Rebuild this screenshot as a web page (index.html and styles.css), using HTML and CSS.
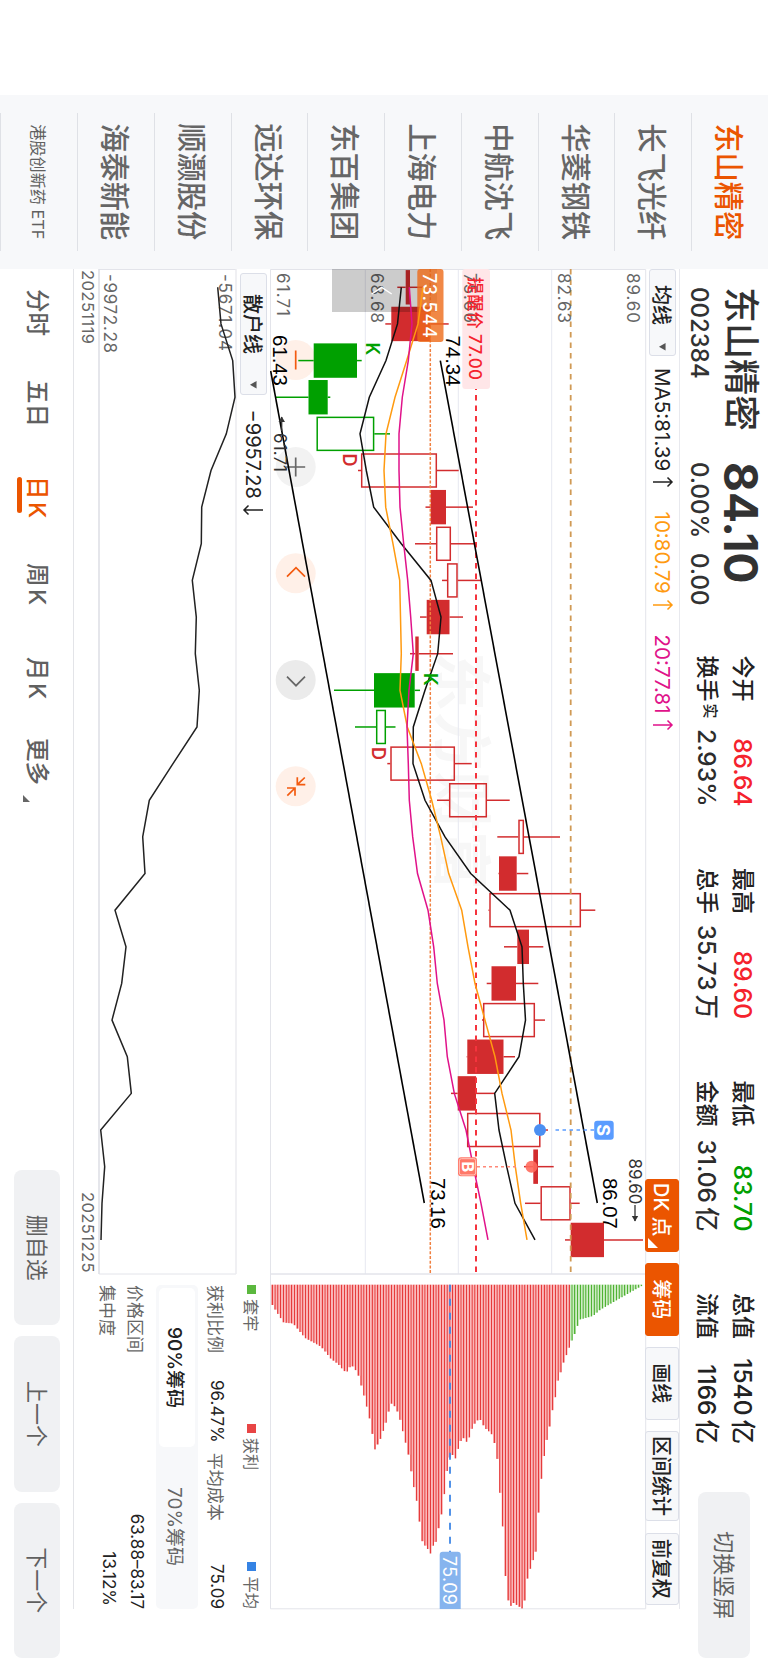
FILE: index.html
```html
<!DOCTYPE html>
<html lang="zh-CN">
<head>
<meta charset="utf-8">
<title>东山精密 002384</title>
<link rel="stylesheet" href="styles.css">
</head>
<body>
<div class="screen">
<div class="stage">
  <nav class="watchlist">
    <div class="stock active">东山精密</div>
    <div class="stock">长飞光纤</div>
    <div class="stock">华菱钢铁</div>
    <div class="stock">中航沈飞</div>
    <div class="stock">上海电力</div>
    <div class="stock">东百集团</div>
    <div class="stock">远达环保</div>
    <div class="stock">顺灏股份</div>
    <div class="stock">海泰新能</div>
    <div class="stock small">港股创新药 ETF</div>
  </nav>
  <main class="main">
    <header class="quote">
      <div class="headline">
        <span class="name">东山精密</span><span class="price">84.10</span>
        <div class="sub"><span class="code">002384</span><span class="pct">0.00%</span><span>0.00</span></div>
      </div>
      <div class="stats">
        <div class="stat"><span>今开</span><b class="up">86.64</b><span>换手<sup>实</sup></span><i>2.93%</i></div>
        <div class="stat"><span>最高</span><b class="up">89.60</b><span>总手</span><i>35.73<em>万</em></i></div>
        <div class="stat"><span>最低</span><b class="down">83.70</b><span>金额</span><i>31.06<em>亿</em></i></div>
        <div class="stat"><span>总值</span><b>1540<em>亿</em></b><span>流值</span><b>1166<em>亿</em></b></div>
      </div>
      <button class="btn rotate">切换竖屏</button>
    </header>
    <div class="toolbar">
      <div class="select ma">均线<svg class="caret" viewBox="0 0 8 8"><path d="M0 0.5H8L4 7.5Z"/></svg></div>
      <div class="legend-ma">
        <span class="m5">MA5:81.39<svg class="arr" viewBox="0 0 12 22"><path d="M6 21V2M1.5 6.5L6 2L10.500 6.500"/></svg></span>
        <span class="m10">10:80.79<svg class="arr" viewBox="0 0 12 22"><path d="M6 21V2M1.5 6.5L6 2L10.500 6.500"/></svg></span>
        <span class="m20">20:77.81<svg class="arr" viewBox="0 0 12 22"><path d="M6 21V2M1.5 6.5L6 2L10.500 6.500"/></svg></span>
      </div>
      <div class="tools">
        <div class="tool on dk">DK 点<svg class="corner" viewBox="0 0 10 10"><path d="M10 0V10H0Z"/></svg></div>
        <div class="tool on">筹码</div>
        <div class="tool">画线</div>
        <div class="tool wide">区间统计</div>
        <div class="tool">前复权</div>
      </div>
    </div>
    <section class="board">
      <svg id="kline" class="kline" viewBox="269 122 1005 376"></svg>
      <svg id="chips" class="chips" viewBox="1274 122 335 376"></svg>
    </section>
    <section class="lower">
      <div class="indicator">
        <div class="ind-bar">
          <div class="select ind">散户线<svg class="caret" viewBox="0 0 8 8"><path d="M0 0.5H8L4 7.5Z"/></svg></div>
          <span class="ind-val">−9957.28<svg class="arr" viewBox="0 0 12 22"><path d="M6 1V20M1.5 15.500L6 20L10.500 15.500"/></svg></span>
        </div>
        <svg id="retail" class="retail" viewBox="269 532 1005 137"></svg>
        <div class="dates"><span>20251119</span><span>20251225</span></div>
      </div>
      <div class="cost">
        <div class="keys"><span class="key k-green">套牢</span><span class="key k-red">获利</span><span class="key k-blue">平均</span></div>
        <div class="pair top"><span>获利比例</span><b>96.47%</b><span class="avg">平均成本</span><b class="end">75.09</b></div>
        <div class="seg"><span class="cur">90%筹码</span><span>70%筹码</span></div>
        <div class="pair"><span>价格区间</span><b class="end">63.88–83.17</b></div>
        <div class="pair"><span>集中度</span><b class="end inset">13.12%</b></div>
      </div>
    </section>
    <footer class="tabs">
      <div class="periods">
        <span>分时</span><span>五日</span><span class="sel">日<em>K</em></span><span>周<em>K</em></span><span>月<em>K</em></span><span class="more">更多<svg class="tri" viewBox="0 0 7 7"><path d="M7 0V7H0Z"/></svg></span>
      </div>
      <div class="actions"><button class="btn">删自选</button><button class="btn">上一个</button><button class="btn">下一个</button></div>
    </footer>
  </main>
</div>
</div>
<script src="chart.js"></script>
</body>
</html>
```
FILE: styles.css
```css
* { box-sizing: border-box; }
html, body { margin: 0; padding: 0; background: #fff; }
body {
  width: 768px; height: 1669px; overflow: hidden;
  font-family: Inter, "Noto Sans CJK SC", sans-serif; color: #323232;
}
.screen { width: 768px; height: 1669px; overflow: hidden; contain: paint; }
.stage {
  width: 1669px; height: 768px; display: flex; padding-left: 94.500px;
  transform-origin: 0 0; transform: translateX(768px) rotate(90deg);
  background: #fff; white-space: nowrap; overflow: hidden;
}
svg { display: block; overflow: visible; }
sup, b, i, em { font-style: normal; }

.watchlist { width: 174.500px; background: #f7f8fa; padding: 0 18px; flex: none; overflow: hidden; }
.stock {
  height: 76.750px; display: flex; align-items: center; justify-content: center;
  border-bottom: 1px solid #dfe1e6; font-size: 29.300px; font-weight: 500; color: #666; padding-bottom: 2px;
}
.stock.active { color: #eb5500; }
.stock.small { font-size: 16.200px; font-weight: 400; color: #606060; padding-bottom: 0; }

.main { width: 1400px; display: flex; flex-direction: column; }

.quote { height: 87.500px; display: flex; flex: none; padding-left: 18px; position: relative; }
.headline { width: 368.500px; display: grid; grid-template-columns: 175px 1fr; grid-template-rows: 54px 30px; align-items: center; }
.name { font-size: 36px; font-weight: 500; line-height: 54px; }
.price { font-size: 46px; font-weight: 700; line-height: 54px; }
.sub { grid-column: 1 / 3; display: grid; grid-template-columns: 175px 91px auto; font-size: 24px; font-weight: 500; line-height: 30px; }
.stats { display: flex; gap: 61.500px; }
.stat {
  width: 151px; display: grid; grid-template-columns: auto auto; justify-content: space-between;
  grid-template-rows: 35.400px 35.400px; align-items: center; padding-top: 8px; align-content: start;
  font-size: 23px; line-height: 35px; color: #222; font-weight: 500;
}
.stat b { font-weight: 500; font-size: 24.500px; text-align: right; }
.stat i { font-weight: 500; font-size: 24.500px; text-align: right; color: #2c2c2c; }
.stat em { margin-left: 4px; }
.stat sup { font-size: 15px; line-height: 10px; vertical-align: 6px; margin-left: 2px; }
.stat .up { color: #f5222d; }
.stat .down { color: #00a000; }
.btn {
  border: 0; background: #f0f1f3; color: #606060; border-radius: 8px; padding: 0;
  font: 400 22px/1 Inter, "Noto Sans CJK SC", sans-serif; width: 155.300px; height: 45.500px;
}
.btn.rotate { width: 166px; height: 52px; margin: 18px 0 0 48.300px; }

.toolbar { width: 1340px; height: 34.500px; flex: none; display: flex; border-top: 1px solid #e8e9ee; }
.select {
  height: 27.500px; border: 1px solid #dcdfe8; border-radius: 3px; background: #f7f8fa; display: flex;
  align-items: center; color: #222; font-size: 20px; font-weight: 500;
}
.select.ma { width: 87px; margin-top: 3px; padding-left: 15px; }
.caret { width: 7.500px; height: 7.500px; margin-left: 18px; fill: #555; }
.legend-ma { display: flex; margin-left: 12px; font-size: 20.600px; align-items: center; }
.legend-ma span { display: flex; align-items: center; }
.arr { width: 12px; height: 22px; fill: none; stroke: currentColor; stroke-width: 1.5; margin-left: 5px; }
.m5 { width: 143.500px; color: #222; }
.m10 { width: 123px; color: #ff9a10; }
.m20 { color: #e0128a; }
.tools { display: flex; gap: 11.500px; margin-left: auto; margin-right: 4px; }
.tool {
  width: 72.500px; height: 34px; border: 1px solid #dcdfe8; border-radius: 3px; background: #f7f8fa; flex: none;
  font-size: 20px; font-weight: 500; color: #222; display: flex; align-items: center; justify-content: center; position: relative;
}
.tool.wide { width: 90px; }
.tool.on { background: #eb5500; border-color: #eb5500; color: #fff; }
.tool.dk { padding-right: 11px; }
.corner { position: absolute; right: 3px; bottom: 2px; width: 10px; height: 10px; fill: #fff; }

.board { display: flex; width: 1340px; height: 376px; flex: none; }
.kline { width: 1005px; height: 376px; }
.chips { width: 335px; height: 376px; }
.lower { display: flex; width: 1340px; height: 197px; flex: none; border-bottom: 1px solid #e3e4e8; }
.indicator { width: 1005px; }
.ind-bar { height: 34px; display: flex; align-items: center; padding-left: 4px; }
.select.ind { width: 122px; padding-left: 20px; margin-top: -1px; }
.select.ind .caret { margin-left: 27px; }
.ind-val { display: flex; align-items: center; margin-left: 14.500px; font-size: 20px; color: #222; }
.retail { width: 1005px; height: 137px; }
.dates { height: 25px; display: flex; justify-content: space-between; font-size: 16.500px; line-height: 23px; color: #666; padding: 0 1px; letter-spacing: .45px; }

.cost { width: 335px; padding-left: 11px; font-size: 17px; color: #666; }
.keys { height: 38px; display: flex; justify-content: space-between; align-items: center; font-size: 16.300px; padding-bottom: 3px; }
.key { display: flex; align-items: center; gap: 5px; }
.key::before { content: ""; width: 9px; height: 9px; margin-top: 1px; }
.k-green::before { background: #5bb83e; }
.k-red::before { background: #e84545; }
.k-blue::before { background: #3583e4; }
.pair { height: 28px; display: flex; align-items: center; }
.pair b { font-weight: 400; color: #222; }
.pair.top { height: 30px; margin-bottom: 4px; }
.pair.top b:first-of-type { margin-left: 27px; }
.pair .avg { margin-left: 10px; }
.pair .end { margin-left: auto; }
.pair .inset { margin-right: 3px; }
.seg { height: 42px; background: #f7f8fa; border-radius: 5px; display: flex; align-items: center; padding: 3px; margin-bottom: 5px; font-size: 19px; }
.seg span { flex: 1; height: 35.500px; display: flex; align-items: center; justify-content: center; }
.seg .cur { background: #fff; border-radius: 5px; color: #222; font-weight: 500; }

.tabs { height: 73px; display: flex; justify-content: space-between; padding: 13px 11px 0 20px; }
.periods { display: flex; font-size: 23.500px; line-height: 46px; color: #606060; font-weight: 500; }
.periods em { margin-left: 2.500px; }
.periods span { width: 91px; position: relative; height: 46px; }
.periods span:nth-child(2) { width: 96px; }
.periods span:nth-child(3) { width: 87px; }
.periods span:nth-child(4) { width: 94px; }
.periods span:nth-child(5) { width: 81px; }
.periods .sel { color: #eb5500; }
.periods .sel::after { content: ""; position: absolute; left: 1px; bottom: 3.500px; width: 36px; height: 5px; border-radius: 3px; background: #eb5500; }
.tri { position: absolute; left: 57px; bottom: 9px; width: 7px; height: 7px; fill: #666; }
.actions { display: flex; gap: 11px; }
```
FILE: chart.js
```js
// Chart values are heights above the bottom edge of the 768-unit-high stage.
const H = 768;
const y = v => +(H - v).toFixed(2);
const x = i => +(287.3 + 36.64 * i).toFixed(2);
const FONT = 'Inter, "Noto Sans CJK SC", sans-serif';

const line = (x1, y1, x2, y2, color, w = 1, extra = '') =>
  `<line x1="${x1}" y1="${y1}" x2="${x2}" y2="${y2}" stroke="${color}" stroke-width="${w}" ${extra}/>`;
const rect = (X, Y, w, h, fill, extra = '') =>
  `<rect x="${X}" y="${Y}" width="${w}" height="${h}" fill="${fill}" ${extra}/>`;
// Text is centred vertically on cy, with capital height 0.727em.
const text = (s, X, cy, size, color, len, extra = '') =>
  `<text x="${X}" y="${cy + size * 0.3635}" font-size="${size}" fill="${color}" font-family='${FONT}' ${len ? `textLength="${len}"` : ''} ${extra}>${s}</text>`;
const path = (vals, color, w) =>
  `<polyline points="${vals.map((v, i) => x(i) + ',' + y(v)).join(' ')}" fill="none" stroke="${color}" stroke-width="${w}"/>`;

const RED = '#d22c2e', GREEN = '#00a000';
// filled?, colour, body low, body high, wick low, wick high
const candles = [
  [1, RED, 405.7, 410, 397.3, 423], [1, RED, 391.3, 430.5, 385.3, 448.7],
  [1, GREEN, 313.7, 357, 298.3, 361.7], [1, GREEN, 308.5, 327.7, 275, 330.3],
  [0, GREEN, 316.5, 374.3, 316.5, 390], [0, RED, 361, 437, 358, 458.7],
  [1, RED, 430.7, 446, 425.5, 473], [0, RED, 436, 451, 415, 474.5],
  [0, RED, 447, 457.7, 442, 481], [1, RED, 426.7, 449.5, 420, 463],
  [1, RED, 415.3, 418.7, 410, 453], [1, GREEN, 374, 414.7, 334, 420],
  [0, GREEN, 376, 386, 355, 395.5], [0, RED, 390.3, 455, 387.3, 471.7],
  [0, RED, 449, 487, 437, 509.7], [0, RED, 518.3, 524, 497.3, 560],
  [1, RED, 499, 516.7, 498.5, 528.3], [0, RED, 489.3, 581, 488.5, 595.3],
  [1, RED, 517.3, 529, 504, 543.3], [1, RED, 491.5, 516, 486.7, 538.3],
  [0, RED, 483, 535, 482, 545], [1, RED, 467.3, 503.5, 466.7, 515],
  [1, RED, 457.7, 476, 451, 495], [0, RED, 467, 540.5, 467, 548],
  [1, RED, 533.3, 538, 524, 553.7], [0, RED, 540.5, 570.7, 525, 579.7],
  [1, RED, 570.7, 604, 565, 643]
];
const ma5 = [401.3, 397.5, 386, 369.3, 360, 366.3, 373.7, 401.3, 431, 441, 437.7, 425, 413.3, 413, 425, 445, 470.7, 510, 522, 523.3, 525.5, 519, 494.7, 499, 506.7, 515, 535];
const ma10 = [423, 418, 406.7, 395, 386, 384, 385.7, 393, 399.7, 400.5, 401.3, 400, 407.3, 421.3, 431.7, 440.7, 448.7, 461.7, 468, 475, 485, 495, 502, 511, 515.3, 520.7, 527];
const ma20 = [409.3, 412, 408.3, 402.3, 399, 399, 400, 403.7, 407.7, 410.7, 413.3, 409, 407, 408.3, 409.3, 412.7, 417.5, 428, 433.7, 437.3, 444, 447.3, 454.3, 466, 473.3, 481, 488];
const retail = [217.7, 221, 232.7, 235, 226.3, 211, 201.7, 201.3, 192.3, 196.3, 195.3, 199.3, 197, 173, 149.3, 142.7, 145, 115, 126, 121.7, 112, 127.3, 131.3, 100.7, 104.7, 102, 101];

function drawKline() {
  let s = text('东方财富', 652, y(461), 59, '#f7f7f7', 238, 'font-weight="700"');
  [551.7, 458.3, 365.3].forEach(v => s += line(269, y(v), 1274, y(v), '#e6e8f0'));
  s += `<path d="M1274 122.300H269.500V497.500H1274Z" fill="none" stroke="#e3e4ea"/>`;

  // Round zoom / scroll controls sit beneath the candles
  [360, 467, 573.3, 680, 786.3].forEach((cx, i) =>
    s += `<circle cx="${cx}" cy="472.300" r="20" fill="${['#fff0e8', '#f2f2f2', '#fff0e8', '#ebebeb', '#fff0e8'][i]}"/>`);
  const icon = (d, c) => `<path d="${d}" fill="none" stroke="${c}" stroke-width="1.700"/>`;
  s += icon('M350.500 472.300H369.500', '#f35b10');
  s += icon('M457.500 472.300H476.500M467 462.800V481.800', '#666');
  s += icon('M576.700 463L567.700 472L576.700 481', '#f35b10');
  s += icon('M676.700 463L685.700 472L676.700 481', '#666');
  s += icon('M777.300 470.700H784.700V462.700M784.700 470.700L777.500 463.200M788 481V473H795.700M788 473L795.700 480.700', '#f35b10');

  candles.forEach(([solid, c, lo, hi, wl, wh], i) => {
    const cx = x(i), left = cx - 17.2;
    if (wh > hi) s += line(cx, y(wh), cx, y(hi), c, 1.5);
    if (wl < lo) s += line(cx, y(lo), cx, y(wl), c, 1.5);
    s += solid
      ? rect(left, y(hi), 34.4, hi - lo, c)
      : rect(left + 0.7, y(hi) + 0.7, 33, hi - lo - 1.4, 'none', `stroke="${c}" stroke-width="1.5"`);
  });

  s += line(269, y(570.7), 1274, y(570.7), '#d09a55', 1.8, 'stroke-dasharray="5.500 5"');
  s += line(269, y(476), 1274, y(476), '#f5333d', 2, 'stroke-dasharray="5.500 5"');
  s += line(269, y(430.3), 1274, y(430.3), '#f08040', 1.5, 'stroke-dasharray="3 1.700"');

  s += rect(269, y(490), 120, 27.7, '#ffe6e8', 'rx="3"');
  [['89.60', 633], ['82.63', 564], ['75.66', 470.5], ['68.68', 376.7]].forEach(([t, v]) =>
    s += text(t, 273, y(v), 17, '#666', 50));
  s += text('61.71', 273, y(283), 17, '#666', 43);
  s += text('提醒价 77.00', 277, y(475), 17, '#f5222d', 103, 'font-weight="500"');

  s += rect(269, 331, 43, 105, 'rgba(0,0,0,.2)');
  s += `<path d="M294 376.300L287.300 386.300L294 396.300" fill="none" stroke="#fff" stroke-width="1.500"/>`;

  s += rect(269, y(443.5), 73, 26.2, '#ee6a18', 'rx="3" opacity=".8"');
  s += text('73.544', 273, y(429.5), 18, '#fff', 65, 'font-weight="500"');

  s += path(ma5, '#111', 1.5) + path(ma10, '#ff9a10', 1.5) + path(ma20, '#e0128a', 1.5);
  s += line(360.7, y(440.3), 1203, y(597.3), '#000', 1.6);
  s += line(371, y(270.7), 1203, y(424.3), '#000', 1.6);

  const num = (t, X, v) => text(t, X, y(v), 20.5, '#000', 51, 'style="font-family:\'Liberation Sans\',Arial,sans-serif"');
  s += num('74.34', 335.5, 453.3) + num('86.07', 1178, 610.7) + num('73.16', 1178, 438) + num('61.43', 335, 280.7);
  s += text('89.60', 1158.5, y(634.7), 17, '#333', 46);
  s += line(1205, y(635), 1221, y(635), '#333', 1.3) + `<path d="M1216 129.800L1221.500 133L1216 136.200Z" fill="#333"/>`;
  s += text('61.71', 433, y(280.5), 17, '#333', 39);
  s += line(417, y(281.7), 431, y(281.7), '#333', 1.3) + `<path d="M422 483L416.500 486.300L422 489.500Z" fill="#333"/>`;

  const mark = (t, X, v, c) => text(t, X, y(v), 18, c, 0, 'font-weight="600"');
  s += mark('K', 342.5, 372.3, GREEN) + mark('K', 673, 430.5, GREEN) + mark('D', 453.5, 349.5, RED) + mark('D', 747, 378.5, RED);

  // Sell marker
  s += line(1130, y(594), 1130, y(555), '#5a9cff', 1.5, 'stroke-dasharray="3.500 3.500"');
  s += `<circle cx="1130" cy="${y(540)}" r="6" fill="#4b8ff2"/>`;
  s += rect(1120.7, y(613.7), 19, 19.5, '#5a9cff', 'rx="3"') + text('S', 1130.2, y(604), 18, '#fff', 0, 'font-weight="700" text-anchor="middle"');
  // Buy marker
  s += line(1166.7, y(516), 1166.7, y(477), '#ff8878', 1.5, 'stroke-dasharray="3 3"');
  s += `<circle cx="1166.700" cy="${y(531.5)}" r="6" fill="#ff6a5c" opacity=".9"/>`;
  s += rect(1157.3, y(477), 19, 19, '#ff7868', 'rx="3"') + rect(1158.7, y(475.6), 16.2, 16.2, 'none', 'rx="2" stroke="#ffc4bc" stroke-width="1"');
  s += text('B', 1166.8, y(467.5), 16, '#fff', 0, 'font-weight="700" text-anchor="middle"');
  document.getElementById('kline').innerHTML = s;
}

// Chip distribution outline: price height, bar end
const chips = [
  [272.3, 1305], [275, 1309.5], [283.5, 1322.5], [293, 1323.5], [296, 1327], [305, 1338], [319, 1345.5], [323, 1349], [331, 1359],
  [338, 1364], [344, 1371], [347.5, 1371.5], [351, 1365.5], [354, 1367], [358.5, 1376], [364, 1396], [369, 1416], [375, 1449.5],
  [378, 1444], [380.7, 1438.5], [386, 1423], [388.7, 1412], [391.7, 1403.5], [394, 1405.5], [397, 1411], [400, 1420], [408, 1453],
  [411, 1471], [413.7, 1486.5], [416.5, 1500], [419.3, 1521], [422, 1541], [425, 1545.7], [427.7, 1549], [430.3, 1554], [433, 1546],
  [436, 1542], [438.7, 1528.7], [441.5, 1515], [444.5, 1493], [447.3, 1469.5], [450, 1457], [452.7, 1455], [455.5, 1458.5],
  [458, 1449.5], [461, 1441], [464, 1438], [466.7, 1442], [469.3, 1437.5], [472, 1429], [475, 1423.5], [478, 1420], [480.7, 1420],
  [483, 1425], [486, 1429], [491.3, 1433.5], [494.3, 1443], [497, 1458], [499.7, 1491], [502.5, 1524], [505, 1572.5], [508.3, 1601.5],
  [511, 1606], [513.7, 1603], [519.5, 1607], [522, 1608.5], [525, 1600], [527.5, 1579], [530.3, 1569], [533, 1560.5], [536, 1551.5],
  [538.5, 1515], [541.5, 1478.5], [544, 1457.5], [547, 1440], [550, 1425.5], [552.3, 1411.5], [555.5, 1396.5], [558, 1381],
  [561, 1372], [564, 1361.5], [566.5, 1355], [569.3, 1347.5], [572, 1340.5], [575, 1333.5], [577.5, 1326], [580, 1319.5],
  [593, 1316], [600, 1310], [617, 1300], [641.5, 1286]
];
function chipEnd(v) {
  for (let i = 1; i < chips.length; i++) {
    const [a, ea] = chips[i - 1], [b, eb] = chips[i];
    if (v <= b) return ea + (eb - ea) * (v - a) / (b - a);
  }
  return 1286;
}
function drawChips() {
  let s = `<path d="M1274 122.300H1608.800V497.500H1274Z" fill="none" stroke="#e3e4ea"/>`;
  const left = 1284.7;
  for (let i = 0; i < 134; i++) {
    const v = 272.3 + i * 2.775, end = chipEnd(v);
    s += rect(left, y(v + 0.75), +(end - left).toFixed(1), 1.5, v < 570.8 ? '#e63b3b' : '#4fb233');
    if (i) {
      const e = Math.min(end, chipEnd(v - 2.775));
      s += rect(left, y(v - 0.75), +(e - left).toFixed(1), 1.275, v < 571 ? '#fbb4b6' : '#cdebc2');
    }
  }
  s += line(left, y(450), 1552, y(450), '#3f87e6', 1.8, 'stroke-dasharray="7 7"');
  s += `<path d="M1609 307.300H1554.700a3 3 0 0 0 -3 3V325.300a3 3 0 0 0 3 3H1609Z" fill="#86b4ee"/>`;
  s += text('75.09', 1556, y(449.5), 18, '#fff', 49);
  document.getElementById('chips').innerHTML = s;
}

function drawRetail() {
  let s = `<path d="M269.500 532V669M1274 532V669" stroke="#e3e4ea"/>`;
  s += line(269, 532, 1274, 532, '#ebebef', 1.5) + line(269, 669, 1274, 669, '#dfe0e6', 1.6);
  s += text('-5671.04', 274, y(225), 17, '#666', 77) + text('-9972.28', 274, y(110), 17, '#666', 79);
  s += path(retail, '#222', 1.5);
  document.getElementById('retail').innerHTML = s;
}
drawKline();
drawChips();
drawRetail();
```
